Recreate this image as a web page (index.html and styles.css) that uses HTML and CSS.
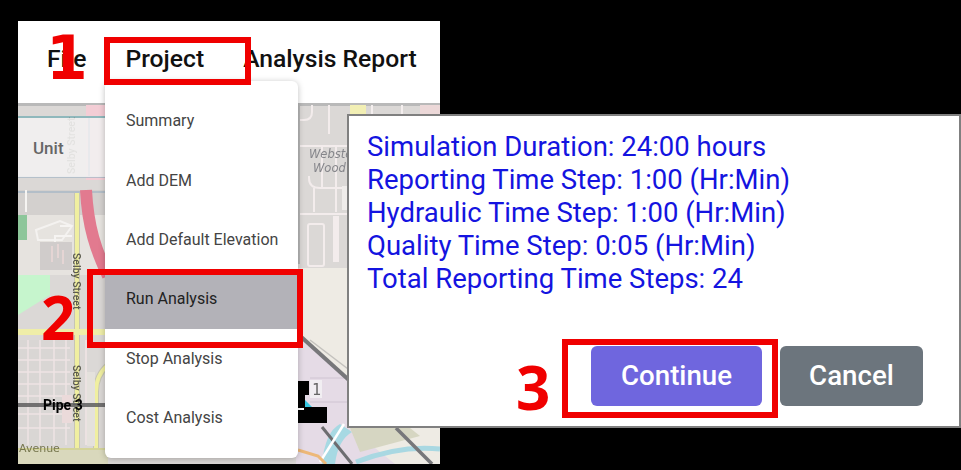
FILE: index.html
```html
<!DOCTYPE html>
<html lang="en">

<head>
  <meta charset="UTF-8">
  <meta name="viewport" content="width=device-width, initial-scale=1.0">
  <title>run analysis steps</title>
  <link rel="stylesheet" href="styles.css">
</head>

<body>
  <div class="stage">
    <div class="app">
      <div class="menubar">
        <div class="menubar-item">File</div>
        <div class="menubar-item">Project</div>
        <div class="menubar-item">Analysis Report</div>
      </div>

      <div class="map">
        <svg class="map-art" viewBox="18 103 422 361" width="422" height="361">
          <!-- base land -->
          <rect x="18" y="103" width="422" height="361" fill="#dbd8d6" />
          <rect x="18" y="103" width="422" height="3" fill="#b9b9b9" />
          <rect x="18" y="190" width="90" height="25" fill="#d3d0ce" />
          <rect x="18" y="215" width="90" height="60" fill="#e6e3df" />
          <rect x="296" y="268" width="144" height="196" fill="#eeebe4" />
          <rect x="18" y="448" width="90" height="16" fill="#d9d8bc" />

          <!-- top strip -->
          <rect x="350" y="105" width="16" height="9" fill="#f2efb4" />
          <rect x="420" y="105" width="20" height="9" fill="#ecd8d8" />
          <path d="M372 105V114M402 105V114" stroke="#f4eeee" stroke-width="2" />

          <!-- divided road, top left -->
          <path d="M86 105H108V180H86Z" fill="#f3cdd5" />
          <path d="M89 118V176" stroke="#8fa3bd" stroke-width="2" />
          <path d="M18 117H108" stroke="#8fb8bc" stroke-width="2" />
          <path d="M18 177H108M18 192H108" stroke="#a9b8c6" stroke-width="1.5" />
          <path d="M86 190C88 228 96 250 108 276" fill="none" stroke="#e27a8f" stroke-width="12" />

          <!-- yellow street and side streets -->
          <path d="M77 193V450M96 450V392Q96 375 108 365" fill="none" stroke="#c6c5b4" stroke-width="6" />
          <path d="M77 193V450M96 450V392Q96 375 108 365" fill="none" stroke="#f0efa0" stroke-width="4" />
          <path d="M18 332H108" stroke="#efeea8" stroke-width="6" />
          <path d="M18 449H108" stroke="#d4d49a" stroke-width="2" />
          <path d="M36 230L60 221L72 226L62 240L38 240Z" fill="none" stroke="#f4f2f0" stroke-width="2" />
          <path d="M72 226H60M72 236H55V268" fill="none" stroke="#f6f4f2" stroke-width="2" />
          <rect x="40" y="242" width="32" height="28" fill="#d0cccb" />
          <path d="M52 246V262M58 244V258M63 250V264" stroke="#ecd8d8" stroke-width="1.5" />
          <path d="M26 190V212" stroke="#f6f4f2" stroke-width="2" />

          <!-- parks -->
          <rect x="18" y="215" width="9" height="25" fill="#8dc69a" />
          <path d="M18 275H50V295L18 315Z" fill="#c6f5cd" />

          <!-- residential grid, bottom left -->
          <rect x="18" y="340" width="52" height="100" fill="#d9d6d4" />
          <path d="M18 348H70M18 360H70M18 372H70M18 384H70M18 396H70M18 414H70M18 428H70M28 340V445M40 340V445M54 340V445M66 340V445" stroke="#eee4e4" stroke-width="1.5" />
          <path d="M86 340V445" stroke="#f2e6e6" stroke-width="1.5" />
          <rect x="87" y="372" width="8" height="74" fill="#e4e1dc" />
          <rect x="62" y="395" width="10" height="28" fill="#ebdada" />

          <!-- street labels -->
          <text class="map-street" transform="translate(75 174) rotate(-90)">Selby Street</text>
          <text class="map-street" transform="translate(73 253) rotate(90)">Selby Street</text>
          <text class="map-street" transform="translate(73 365) rotate(90)">Selby Street</text>
          <text class="map-avenue" x="19" y="452">Avenue</text>

          <!-- pipe 3 -->
          <path d="M18 405H108" stroke="#5f5f5f" stroke-width="4" opacity="0.85" />
          <text class="map-pipe" x="43" y="410">Pipe 3</text>

          <!-- blocks, top right -->
          <path d="M312 105V112Q312 120 304 120H298M329 105V134M298 146H347M322 146V188M336 146V188M309 176V178Q309 188 320 188H347M314 188V212M336 188V212M298 214H347" fill="none" stroke="#f3ecec" stroke-width="2" />
          <rect x="308" y="224" width="16" height="42" rx="2" fill="none" stroke="#f3ecec" stroke-width="2" />
          <path d="M336 216V262" stroke="#f3ecec" stroke-width="6" />
          <rect x="342" y="186" width="5" height="24" fill="#efecea" />
          <path d="M299 103V264" stroke="#b8b8b8" stroke-width="2" />
          <text class="map-place" x="309" y="158">Webster</text>
          <text class="map-place" x="313" y="172">Wood</text>

          <!-- lavender area, railway and water, bottom right -->
          <path d="M296 332L350 381V428L395 464H296Z" fill="#e5dbe6" />
          <path d="M310 378H347M310 402H347" stroke="#cfc4d2" stroke-width="1" />
          <path d="M298 334L350 381" stroke="#77777a" stroke-width="4" />
          <path d="M310 340L352 372" stroke="#c4c2be" stroke-width="1.5" />
          <path d="M340 424Q325 432 322 464H335Q338 440 352 432Z" fill="#a7d9e3" />
          <path d="M350 428L410 428L420 436L360 452Z" fill="#d6d6c2" />
          <path d="M356 462Q400 445 440 449" fill="none" stroke="#a9d8e2" stroke-width="5" />
          <path d="M396 428L432 464" stroke="#77777a" stroke-width="3.5" />
          <path d="M322 427L352 464" stroke="#6d6d70" stroke-width="3" />
          <path d="M344 424L320 462" stroke="#ffffff" stroke-width="2.5" />
          <path d="M298 450L318 456L326 464" fill="none" stroke="#edb878" stroke-width="3" />

          <!-- black node -->
          <path d="M298 381H309V395H305V407H327V423H298Z" fill="#000" />
          <path d="M305 400L312 407H305Z" fill="#35c6e0" />
          <path d="M298 408H304V410H298Z" fill="#fff" />
          <rect x="310" y="380" width="12" height="18" fill="#f1eef2" />
          <text class="map-node" x="312" y="395">1</text>
        </svg>

        <div class="unit-panel">Unit</div>
      </div>

      <div class="dropdown">
        <div class="dropdown-item">Summary</div>
        <div class="dropdown-item">Add DEM</div>
        <div class="dropdown-item">Add Default Elevation</div>
        <div class="dropdown-item is-active">Run Analysis</div>
        <div class="dropdown-item">Stop Analysis</div>
        <div class="dropdown-item">Cost Analysis</div>
      </div>
    </div>

    <div class="dialog">
      <div class="dialog-text">
        <div>Simulation Duration: 24:00 hours</div>
        <div>Reporting Time Step: 1:00 (Hr:Min)</div>
        <div>Hydraulic Time Step: 1:00 (Hr:Min)</div>
        <div>Quality Time Step: 0:05 (Hr:Min)</div>
        <div>Total Reporting Time Steps: 24</div>
      </div>
      <div class="dialog-actions">
        <button class="button button-primary">Continue</button>
        <button class="button button-muted">Cancel</button>
      </div>
    </div>

    <!-- step callouts -->
    <div class="callout callout-1"></div>
    <div class="callout callout-2"></div>
    <div class="callout callout-3"></div>
    <div class="step step-1">1</div>
    <div class="step step-2">2</div>
    <div class="step step-3">3</div>
  </div>
</body>

</html>
```

FILE: styles.css
```css
* {
  margin: 0;
  padding: 0;
  box-sizing: border-box;
}

body {
  height: 470px;
  overflow: hidden;
  background: #000;
  font-family: Roboto, "Liberation Sans", sans-serif;
}

.stage {
  position: relative;
  height: 470px;
  padding: 21px 0 6px 18px;
}

.app {
  position: relative;
  display: flex;
  flex-direction: column;
  width: 422px;
  height: 443px;
  background: #fff;
}

.menubar {
  display: flex;
  align-items: center;
  gap: 39px;
  height: 82px;
  padding: 0 0 8px 29px;
  flex-shrink: 0;
}

.menubar-item {
  font-size: 24.7px;
  font-weight: 500;
  color: #111;
  white-space: nowrap;
}

.map {
  position: relative;
  flex: 1;
  overflow: hidden;
}

.map-art {
  display: block;
  filter: blur(0.7px);
}

.map-pipe {
  font: 700 14px Roboto, sans-serif;
  fill: #000;
}

.map-street {
  font: 500 10.5px Roboto, sans-serif;
  fill: #5c5c4e;
}

.map-avenue {
  font: 500 11px "DejaVu Sans", sans-serif;
  fill: #77774f;
}

.map-place {
  font: italic 11.5px "DejaVu Sans", sans-serif;
  fill: #85858a;
}

.map-node {
  font: 500 15px "DejaVu Sans Mono", monospace;
  fill: #666;
}

.unit-panel {
  position: absolute;
  left: 0;
  top: 15px;
  width: 90px;
  height: 59px;
  padding: 20px 0 0 15px;
  background: rgba(242, 241, 241, 0.9);
  font-size: 17px;
  font-weight: 500;
  color: #666;
}

.dropdown {
  position: absolute;
  left: 87px;
  top: 60px;
  width: 193px;
  height: 377px;
  padding-top: 10px;
  background: #fff;
  border-radius: 6px;
  box-shadow: 0 1px 6px rgba(0, 0, 0, 0.25);
}

.dropdown-item {
  display: flex;
  align-items: center;
  height: 59.4px;
  padding: 0 0 0 21px;
  font-size: 16px;
  color: #444;
  white-space: nowrap;
}

.dropdown-item.is-active {
  background: #b3b2b8;
  color: #222;
}

.dialog {
  position: absolute;
  left: 347px;
  top: 114px;
  display: flex;
  flex-direction: column;
  width: 614px;
  height: 314px;
  padding: 14px 36px 20px 18px;
  background: #fff;
  border: 2px solid #808080;
}

.dialog-text {
  font-size: 27.5px;
  line-height: 33px;
  color: #1414e0;
}

.dialog-actions {
  display: flex;
  justify-content: flex-end;
  gap: 18px;
  margin-top: auto;
}

.button {
  height: 60px;
  border: 0;
  border-radius: 6px;
  font-family: Roboto, sans-serif;
  font-size: 27.7px;
  font-weight: 500;
  color: #fff;
  padding-bottom: 2px;
}

.button-primary {
  width: 171px;
  background: #6f66de;
}

.button-muted {
  width: 143px;
  background: #6c757d;
}

.callout {
  position: absolute;
  border: 6px solid #f00000;
}

.callout-1 {
  left: 104px;
  top: 37px;
  width: 147px;
  height: 48px;
}

.callout-2 {
  left: 87px;
  top: 269px;
  width: 216px;
  height: 79px;
}

.callout-3 {
  left: 562px;
  top: 339px;
  width: 216px;
  height: 79px;
}

.step {
  position: absolute;
  font-family: "Open Sans", sans-serif;
  font-size: 60px;
  font-weight: 700;
  line-height: 62px;
  color: #f00000;
}

.step-1 {
  left: 46px;
  top: 27px;
  font-family: "DejaVu Sans", sans-serif;
}

.step-2 {
  left: 41px;
  top: 286px;
}

.step-3 {
  left: 516px;
  top: 356px;
}
```
